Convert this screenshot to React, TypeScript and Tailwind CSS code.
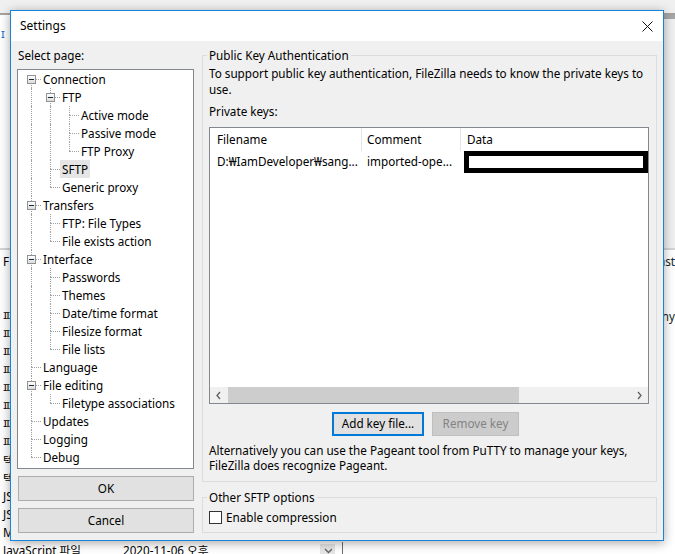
import React from "react";

type TreeNode = { label: string; children?: TreeNode[]; selected?: boolean };

type TreeRow = {
  label: string;
  depth: number;
  hasChildren: boolean;
  isFirst: boolean;
  isLast: boolean;
  lines: boolean[];
  selected?: boolean;
};

const pages: TreeNode[] = [
  {
    label: "Connection",
    children: [
      { label: "FTP", children: [{ label: "Active mode" }, { label: "Passive mode" }, { label: "FTP Proxy" }] },
      { label: "SFTP", selected: true },
      { label: "Generic proxy" },
    ],
  },
  { label: "Transfers", children: [{ label: "FTP: File Types" }, { label: "File exists action" }] },
  {
    label: "Interface",
    children: [
      { label: "Passwords" },
      { label: "Themes" },
      { label: "Date/time format" },
      { label: "Filesize format" },
      { label: "File lists" },
    ],
  },
  { label: "Language" },
  { label: "File editing", children: [{ label: "Filetype associations" }] },
  { label: "Updates" },
  { label: "Logging" },
  { label: "Debug" },
];

function flatten(nodes: TreeNode[], depth: number, lines: boolean[], out: TreeRow[]) {
  nodes.forEach((n, i) => {
    out.push({
      label: n.label,
      depth,
      hasChildren: !!n.children,
      isFirst: depth === 0 && i === 0,
      isLast: i === nodes.length - 1,
      lines,
      selected: n.selected,
    });
    if (n.children) flatten(n.children, depth + 1, [...lines, i < nodes.length - 1], out);
  });
  return out;
}

const rows = flatten(pages, 0, [], []);

// background explorer rows: only the first glyphs peek out left of the dialog
const bgRows = [
  { type: "파", right: "ny" },
  { type: "파", right: "" },
  { type: "파", right: "" },
  { type: "파", right: "" },
  { type: "파", right: "" },
  { type: "파", right: "" },
  { type: "파", right: "" },
  { type: "파", right: "" },
  { type: "텍", right: "" },
  { type: "텍", right: "" },
  { type: "JS", right: "" },
  { type: "JS", right: "" },
  { type: "M", right: "" },
];

function TreeLine({ row }: { row: TreeRow }) {
  return (
    <div className="flex h-[18px] pl-[4px]">
      {row.lines.map((on, k) => (
        <div key={k} className="relative h-full w-[19px] shrink-0">
          {on && <div className="absolute left-[9px] top-0 h-full border-l border-dotted border-[#a0a0a0]" />}
        </div>
      ))}
      <div className="relative h-full w-[19px] shrink-0">
        {!row.isFirst && <div className="absolute left-[9px] top-0 h-[9px] border-l border-dotted border-[#a0a0a0]" />}
        {!row.isLast && <div className="absolute left-[9px] top-[9px] h-[9px] border-l border-dotted border-[#a0a0a0]" />}
        <div className="absolute left-[9px] top-[9px] w-[10px] border-t border-dotted border-[#a0a0a0]" />
        {row.hasChildren && (
          <div className="absolute left-[5px] top-[5px] flex h-[9px] w-[9px] items-center justify-center border border-[#919191] bg-gradient-to-b from-white to-[#dcdcdc]">
            <div className="h-px w-[5px] bg-[#1e2a3a]" />
          </div>
        )}
      </div>
      <span className={`whitespace-nowrap px-[2px] leading-[18px] ${row.selected ? "bg-[#e5e5e5]" : ""}`}>{row.label}</span>
    </div>
  );
}

function WinButton({ children, primary, disabled }: { children: React.ReactNode; primary?: boolean; disabled?: boolean }) {
  const cls = disabled
    ? "border border-[#bfbfbf] bg-[#cccccc] text-[#838383]"
    : primary
    ? "border-2 border-[#0078d7] bg-[#e1e1e1]"
    : "border border-[#adadad] bg-[#e1e1e1]";
  return <div className={`flex h-full items-center justify-center pb-[2px] ${cls}`}>{children}</div>;
}

function Chevron({ dir }: { dir: "left" | "right" | "down" }) {
  const pts = dir === "left" ? "5,1 2,4.5 5,8" : dir === "right" ? "2,1 5,4.5 2,8" : "1,2 4.5,5.5 8,2";
  return (
    <svg width="8" height="9" viewBox="0 0 8 9">
      <polyline points={pts} fill="none" stroke="#606060" strokeWidth="1.3" />
    </svg>
  );
}

export default function App() {
  return (
    <div className="relative h-[554px] w-[675px] overflow-hidden bg-white font-['Noto_Sans','Noto_Sans_CJK_KR',sans-serif] text-[11.7px] text-black">
      {/* Explorer window behind the dialog */}
      <div className="flex flex-col">
        <div className="h-[13px] shrink-0 bg-[#f0f0f0]" />
        <div className="h-[2px] shrink-0 bg-[#a3a3a3]" />
        <div className="flex h-[233px] shrink-0 justify-between bg-white">
          <div className="pl-[1px] pt-[10px] text-[#1a73d9]">ɪ</div>
          <div className="w-[12px] border-t-[4px] border-[#a8a8a8] bg-[#f0f0f0]" />
        </div>
        <div className="h-[2px] shrink-0 bg-[#d4d4d4]" />
        <div className="flex h-[24px] shrink-0 items-center justify-between pl-[3px] leading-none">
          <span>F</span>
          <span className="text-[#222]">ast</span>
        </div>
        <div className="flex shrink-0 flex-col pt-[34px]">
          {bgRows.map((r, i) => (
            <div key={i} className="flex h-[18px] items-center justify-between pl-[3px]">
              <span className="whitespace-nowrap">{r.type}</span>
              <span className="text-[#222]">{r.right}</span>
            </div>
          ))}
          <div className="flex h-[18px] items-center pl-[3px]">
            <span className="w-[120px] whitespace-nowrap">JavaScript 파일</span>
            <span className="w-[197px] whitespace-nowrap">2020-11-06 오후</span>
            <div className="flex h-[14px] w-[15px] items-center justify-center bg-[#e6e6e6]">
              <Chevron dir="down" />
            </div>
            <div className="ml-[7px] h-[18px] w-px bg-[#6e6e6e]" />
          </div>
        </div>
      </div>

      {/* Settings dialog */}
      <div className="absolute left-[10px] top-[10px] flex h-[531px] w-[654px] flex-col border border-[#1883d7] bg-[#f0f0f0] shadow-[0_2px_10px_rgba(0,0,0,0.35)]">
        <div className="flex h-[30px] shrink-0 items-center justify-between bg-white pl-[9px] pr-[10px]">
          <span className="text-[12px]">Settings</span>
          <svg width="11" height="11" viewBox="0 0 11 11">
            <path d="M0.5 0.5 L10.5 10.5 M10.5 0.5 L0.5 10.5" stroke="#111" strokeWidth="1" />
          </svg>
        </div>

        <div className="flex gap-[8px] px-[6px] pt-[6px]">
          {/* Left: page tree */}
          <div className="flex w-[177px] shrink-0 flex-col">
            <div className="h-[16px] pl-[1px] leading-[16px]">Select page:</div>
            <div className="mt-[6px] h-[400px] border border-[#828790] bg-white">
              {rows.map((r) => (
                <TreeLine key={r.label} row={r} />
              ))}
            </div>
            <div className="mt-[7px] ml-px h-[25px]">
              <WinButton>
                <span className="leading-[22px]">OK</span>
              </WinButton>
            </div>
            <div className="mt-[7px] ml-px h-[25px]">
              <WinButton>
                <span className="leading-[22px]">Cancel</span>
              </WinButton>
            </div>
          </div>

          {/* Right: SFTP page */}
          <div className="flex w-[455px] shrink-0 flex-col">
            <fieldset className="h-[435px] border border-[#dcdcdc] px-[6px]">
              <legend className="-ml-[2px] px-[2px] leading-[16px]">Public Key Authentication</legend>
              <p className="mt-[2px] leading-[16px]">
                To support public key authentication, FileZilla needs to know the private keys to use.
              </p>
              <div className="mt-[6px] leading-[16px]">Private keys:</div>
              <div className="mt-[8px] flex h-[277px] w-[440px] flex-col border border-[#828790] bg-white">
                <div className="flex h-[23px] items-center">
                  <div className="w-[151px] pl-[7px]">Filename</div>
                  <div className="h-full w-px bg-[#e5e5e5]" />
                  <div className="w-[98px] pl-[5px]">Comment</div>
                  <div className="h-full w-px bg-[#e5e5e5]" />
                  <div className="flex-1 pl-[6px]">Data</div>
                </div>
                <div className="flex h-[22px] items-center">
                  <div className="w-[151px] whitespace-nowrap pl-[7px]">D:₩IamDeveloper₩sang...</div>
                  <div className="w-px" />
                  <div className="w-[98px] whitespace-nowrap pl-[5px]">imported-ope...</div>
                  <div className="w-px" />
                  <div className="h-[22px] flex-1 pl-[3px]">
                    <div className="h-full border-[5px] border-black bg-white" />
                  </div>
                </div>
                <div className="flex-1" />
                <div className="flex h-[16px] items-center bg-[#f0f0f0]">
                  <div className="flex w-[17px] justify-center">
                    <Chevron dir="left" />
                  </div>
                  <div className="ml-[1px] h-full w-[291px] bg-[#cdcdcd]" />
                  <div className="flex-1" />
                  <div className="flex w-[17px] justify-center">
                    <Chevron dir="right" />
                  </div>
                </div>
              </div>
              <div className="mt-[8px] flex h-[24px] gap-[8px] pl-[123px]">
                <div className="w-[92px]">
                  <WinButton primary>
                    <span className="leading-[20px]">Add key file...</span>
                  </WinButton>
                </div>
                <div className="w-[87px]">
                  <WinButton disabled>
                    <span className="leading-[22px]">Remove key</span>
                  </WinButton>
                </div>
              </div>
              <p className="mt-[7px] leading-[15px]">
                Alternatively you can use the Pageant tool from PuTTY to manage your keys, FileZilla does recognize Pageant.
              </p>
            </fieldset>

            <fieldset className="mt-[7px] h-[44px] border border-[#dcdcdc] px-[6px]">
              <legend className="-ml-[2px] px-[2px] leading-[16px]">Other SFTP options</legend>
              <label className="mt-[4px] flex h-[16px] items-center gap-[4px]">
                <span className="h-[13px] w-[13px] border border-[#333] bg-white" />
                <span className="leading-[16px]">Enable compression</span>
              </label>
            </fieldset>
          </div>
        </div>
      </div>
    </div>
  );
}
